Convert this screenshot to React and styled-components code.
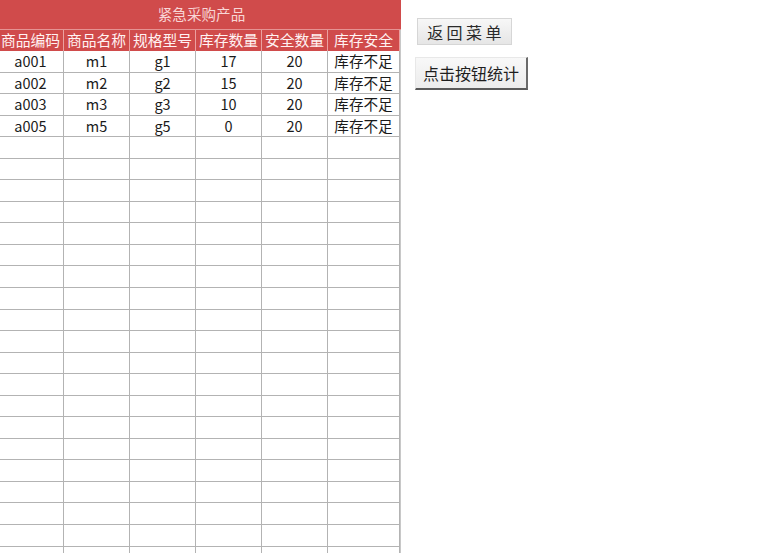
import React from "react";
import styled, { createGlobalStyle } from "styled-components";

const GlobalStyle = createGlobalStyle`
  html, body { margin: 0; padding: 0; background: #ffffff; }
  body { font-family: "Noto Sans CJK SC", "Noto Sans", sans-serif; overflow: hidden; }
  #root { width: 780px; height: 553px; overflow: hidden; }
`;

const Page = styled.div`
  display: flex;
  align-items: flex-start;
  width: 780px;
  height: 553px;
  overflow: hidden;
`;

const Sheet = styled.div`
  margin-left: -2px;
  width: 403px;
  height: 553px;
  overflow: hidden;
  flex-shrink: 0;
`;

const TitleBand = styled.div`
  height: 30px;
  background: #d04b4b;
  color: #f8d6d6;
  font-size: 14.6px;
  display: flex;
  align-items: center;
  justify-content: center;
  padding-left: 4px;
  box-sizing: border-box;
  border-bottom: 1px solid #e59393;
  line-height: 1;
`;

const Grid = styled.div`
  display: grid;
  grid-template-columns: 66px 66px 66px 66px 66px 72px;
  grid-auto-rows: 21.55px;
  grid-template-rows: 21px;
  border-right: 1px solid #c8c8c8;
  width: 403px;
  box-sizing: border-box;
`;

const HeadCell = styled.div`
  background: #d04b4b;
  color: #fff2f2;
  font-size: 14.8px;
  display: flex;
  align-items: center;
  justify-content: center;
  border-right: 1px solid #eba0a0;
  white-space: nowrap;
  overflow: hidden;
  line-height: 1;
`;

const Cell = styled.div`
  border-right: 1px solid #b3b3b3;
  border-bottom: 1px solid #b3b3b3;
  color: #1a1a1a;
  font-size: ${(p) => (p.$cjk ? "14.6px" : "14.5px")};
  display: flex;
  align-items: center;
  justify-content: center;
  white-space: nowrap;
  overflow: hidden;
  line-height: 1;
  box-sizing: border-box;
`;

const Actions = styled.div`
  display: flex;
  flex-direction: column;
  align-items: flex-start;
  gap: 12px;
  margin-left: 14px;
  padding-top: 18px;
`;

const MenuButton = styled.button`
  font-family: "Noto Sans CJK SC", sans-serif;
  font-size: 16px;
  letter-spacing: 3.4px;
  color: #2a2a2a;
  height: 27px;
  width: 95px;
  padding: 0 0 0 3px;
  margin-left: 2px;
  border: 1px solid #d6d6d6;
  background: linear-gradient(#f7f7f7, #e6e6e6);
  display: flex;
  align-items: center;
  justify-content: center;
  line-height: 1;
`;

const StatButton = styled.button`
  font-family: "Noto Sans CJK SC", sans-serif;
  font-size: 16px;
  color: #1e1e1e;
  height: 33px;
  width: 113px;
  padding: 0 0 1px 0;
  border: none;
  border-top: 1px solid #e8e8e8;
  border-left: 1px solid #e8e8e8;
  border-right: 2px solid #6a6a6a;
  border-bottom: 2px solid #5a5a5a;
  background: linear-gradient(#f8f8f8, #ececec);
  display: flex;
  align-items: center;
  justify-content: center;
  line-height: 1;
`;

const headers = ["商品编码", "商品名称", "规格型号", "库存数量", "安全数量", "库存安全"];
const rows = [
  ["a001", "m1", "g1", "17", "20", "库存不足"],
  ["a002", "m2", "g2", "15", "20", "库存不足"],
  ["a003", "m3", "g3", "10", "20", "库存不足"],
  ["a005", "m5", "g5", "0", "20", "库存不足"],
];
const EMPTY_ROWS = 20;

export default function App() {
  const empty = Array.from({ length: EMPTY_ROWS }, () => ["", "", "", "", "", ""]);
  const all = [...rows, ...empty];
  return (
    <>
      <GlobalStyle />
      <Page>
        <Sheet>
          <TitleBand>紧急采购产品</TitleBand>
          <Grid>
            {headers.map((h) => (
              <HeadCell key={h}>{h}</HeadCell>
            ))}
            {all.map((r, i) =>
              r.map((v, j) => (
                <Cell key={`${i}-${j}`} $cjk={j === 5}>
                  {v}
                </Cell>
              ))
            )}
          </Grid>
        </Sheet>
        <Actions>
          <MenuButton>返回菜单</MenuButton>
          <StatButton>点击按钮统计</StatButton>
        </Actions>
      </Page>
    </>
  );
}
